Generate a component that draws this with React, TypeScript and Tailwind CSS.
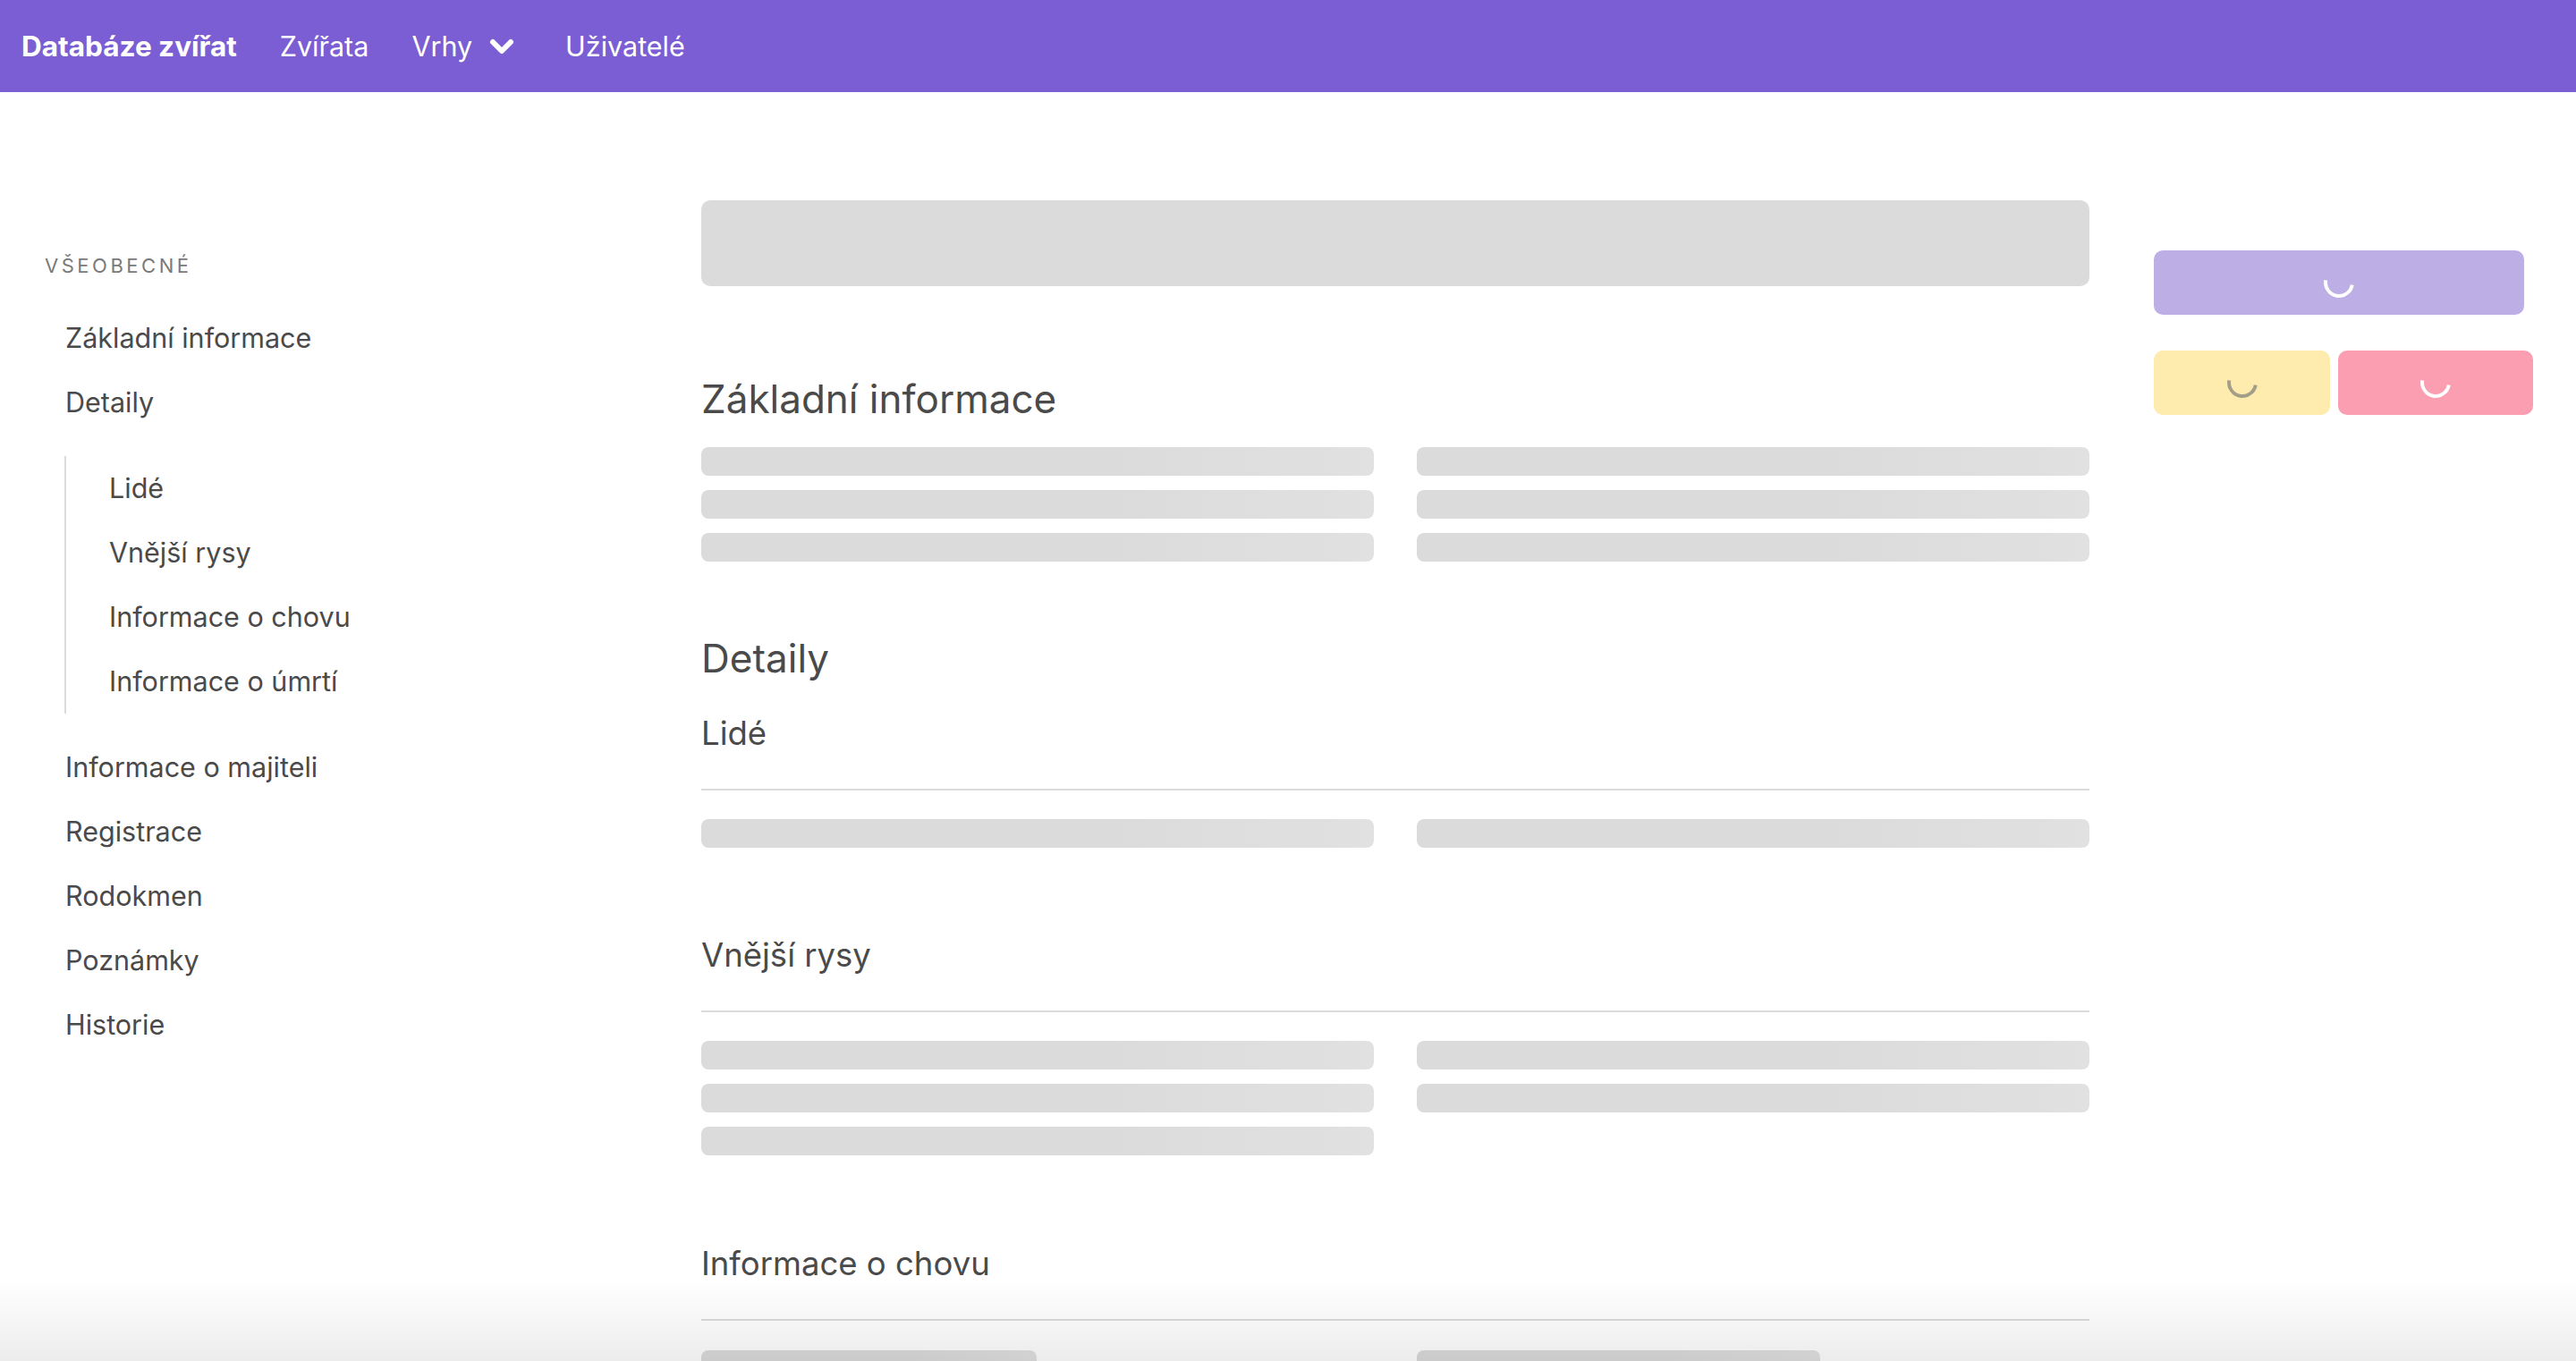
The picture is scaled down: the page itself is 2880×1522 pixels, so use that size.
import React from 'react';

const topItems = ['Informace o majiteli', 'Registrace', 'Rodokmen', 'Poznámky', 'Historie'];
const nestedItems = ['Lidé', 'Vnější rysy', 'Informace o chovu', 'Informace o úmrtí'];

function Bar({ w = 'w-full' }: { w?: string }) {
  return (
    <div
      className={`${w} h-[32px] rounded-[8px] bg-gradient-to-r from-[#dbdbdb] from-60% to-[#e1e1e1]`}
    />
  );
}

function Spinner({ color }: { color: string }) {
  return (
    <span
      className={`block w-[34px] h-[34px] rounded-full border-[4px] ${color} border-t-transparent border-r-transparent -rotate-[35deg]`}
    />
  );
}

function Subsection({ title, left, right }: { title: string; left: number; right: number }) {
  return (
    <div className="flex flex-col">
      <h3 className="h-[46px] leading-[46px] text-[36.5px] text-[#4a4a4a]">{title}</h3>
      <div className="mt-[39px] h-[2px] bg-[#dbdbdb]" />
      <div className="mt-[32px] grid grid-cols-2 gap-x-[48px]">
        <div className="flex flex-col gap-[16px]">
          {Array.from({ length: left }).map((_, i) => (
            <Bar key={i} />
          ))}
        </div>
        <div className="flex flex-col gap-[16px]">
          {Array.from({ length: right }).map((_, i) => (
            <Bar key={i} />
          ))}
        </div>
      </div>
    </div>
  );
}

export default function App() {
  return (
    <div
      className="relative h-[1522px] overflow-hidden bg-white text-[#4a4a4a]"
      style={{ fontFamily: 'Inter, "Noto Sans", sans-serif' }}
    >
      {/* navbar */}
      <nav className="h-[103px] bg-[#7b5ed3] flex items-center text-white text-[30.5px]">
        <span className="pl-[24px] pr-[24px] text-[31.5px] font-bold">Databáze zvířat</span>
        <span className="px-[24px]">Zvířata</span>
        <span className="pl-[24px] flex items-center gap-[19px]">
          Vrhy
          <svg width="28" height="20" viewBox="0 0 28 20" fill="none">
            <path d="M4 5 L14 15 L24 5" stroke="white" strokeWidth="6" strokeLinecap="round" strokeLinejoin="round" />
          </svg>
        </span>
        <span className="pl-[57px]">Uživatelé</span>
      </nav>

      <div className="flex">
        {/* sidebar */}
        <aside className="w-[784px] shrink-0 pt-[180px] pl-[49px]">
          <p className="h-[28px] leading-[28px] pl-[1px] text-[22px] uppercase tracking-[0.16em] text-[#7a7a7a]">
            Všeobecné
          </p>
          <ul className="mt-[31px] text-[30.5px]">
            <li className="h-[72px] flex items-center pl-[24px]">Základní informace</li>
            <li className="h-[72px] flex items-center pl-[24px]">Detaily</li>
            <li className="mt-[24px] mb-[24px] ml-[23px] border-l-[2px] border-[#dbdbdb]">
              {nestedItems.map((t) => (
                <div key={t} className="h-[72px] flex items-center pl-[48px]">
                  {t}
                </div>
              ))}
            </li>
            {topItems.map((t) => (
              <li key={t} className="h-[72px] flex items-center pl-[24px]">
                {t}
              </li>
            ))}
          </ul>
        </aside>

        {/* main */}
        <main className="w-[1552px] shrink-0 pt-[121px] flex flex-col">
          <div className="h-[96px] rounded-[10px] bg-[#dbdbdb]" />
          <h2 className="mt-[100px] h-[52px] leading-[52px] text-[44px]">Základní informace</h2>
          <div className="mt-[28px] grid grid-cols-2 gap-x-[48px] gap-y-[16px]">
            <Bar />
            <Bar />
            <Bar />
            <Bar />
            <Bar />
            <Bar />
          </div>
          <h2 className="mt-[82px] h-[52px] leading-[52px] text-[44px]">Detaily</h2>
          <div className="mt-[35px]">
            <Subsection title="Lidé" left={1} right={1} />
          </div>
          <div className="mt-[97px]">
            <Subsection title="Vnější rysy" left={3} right={2} />
          </div>
          <div className="mt-[98px] flex flex-col">
            <h3 className="h-[46px] leading-[46px] text-[36.5px]">Informace o chovu</h3>
            <div className="mt-[39px] h-[2px] bg-[#dbdbdb]" />
            <div className="mt-[33px] grid grid-cols-2 gap-x-[48px]">
              <Bar w="w-[375px]" />
              <Bar w="w-[451px]" />
            </div>
          </div>
        </main>

        {/* actions */}
        <div className="ml-[72px] pt-[177px] flex flex-col w-[424px]">
          <button className="w-[414px] h-[72px] rounded-[10px] bg-[#bdaee6] flex items-center justify-center">
            <Spinner color="border-white" />
          </button>
          <div className="mt-[40px] flex gap-[9px]">
            <button className="w-[197px] h-[72px] rounded-[10px] bg-[#feebae] flex items-center justify-center">
              <Spinner color="border-[#a39e88]" />
            </button>
            <button className="w-[218px] h-[72px] rounded-[10px] bg-[#fc9eb1] flex items-center justify-center">
              <Spinner color="border-white" />
            </button>
          </div>
        </div>
      </div>

      {/* window bottom shadow */}
      <div className="pointer-events-none absolute inset-x-0 bottom-0 h-[90px] bg-gradient-to-b from-transparent to-black/[0.075]" />
    </div>
  );
}
